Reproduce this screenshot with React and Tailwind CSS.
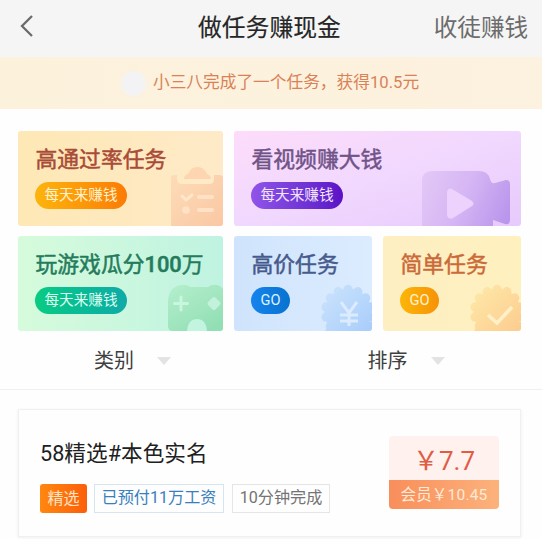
import React from "react";

function Promo({ className, title, titleClass, pill, pillClass, children }) {
  return (
    <section className={`relative flex h-[95px] flex-col items-start overflow-hidden rounded-[3px] ${className}`}>
      <h2 className={`mt-[13px] ml-[17.5px] h-8 whitespace-nowrap text-[21.8px] leading-8 [-webkit-text-stroke:0.5px_currentColor] ${titleClass}`}>{title}</h2>
      <span className={`mt-[6px] ml-[17px] flex h-[27px] items-center justify-center rounded-full text-[14.6px] leading-none whitespace-nowrap ${pillClass}`}>{pill}</span>
      {children}
    </section>
  );
}

function Clipboard() {
  return (
    <svg className="absolute right-0 bottom-0" width="53" height="60" viewBox="0 0 53 60">
      <defs>
        <linearGradient id="clip" x1="0" y1="0" x2="1" y2="1">
          <stop offset="0" stopColor="#fddcb8" />
          <stop offset="1" stopColor="#fac7a3" />
        </linearGradient>
      </defs>
      <path d="M1 12q0-3 3-3h3v4q0 5 5 5h27q5 0 5-5V9h6q2 0 3 2v49H1z" fill="url(#clip)" />
      <path d="M14 13q0-4 4-5 3-7 9.500-7T37 8q4 1 4 5z" fill="#fdd5b0" />
      <path d="m12 30 4 4 6-5" fill="none" stroke="#ffe7ca" strokeWidth="3" strokeLinecap="round" strokeLinejoin="round" />
      <path d="M29 31h13M29 44h13" stroke="#ffe2c5" strokeWidth="4" strokeLinecap="round" />
      <circle cx="16" cy="44" r="3.8" fill="#ffe2c5" />
    </svg>
  );
}

function Camera() {
  return (
    <svg className="absolute right-[9px] bottom-0" width="92" height="56" viewBox="0 0 92 56">
      <defs>
        <linearGradient id="cam" x1="0" y1="0" x2="92" y2="40" gradientUnits="userSpaceOnUse">
          <stop offset="0" stopColor="#e4c9f6" />
          <stop offset=".5" stopColor="#d6b6f4" />
          <stop offset="1" stopColor="#b995ec" />
        </linearGradient>
      </defs>
      <path d="M2 56V11Q2 1 12 1h47q9 0 11 8 1 5 5 4l11-3q4 0 4 4v36q0 5-5 4l-12-4v6z" fill="url(#cam)" />
      <path d="M27 22q1-5 5-3l20 12q3 3 0 5L33 48q-5 2-6-3z" fill="#ecd2fc" />
    </svg>
  );
}

function Gamepad() {
  return (
    <svg className="absolute right-0 bottom-0" width="57" height="47" viewBox="0 0 57 47">
      <defs>
        <linearGradient id="game" x1="0" y1="0" x2=".7" y2="1">
          <stop offset="0" stopColor="#b5efcd" />
          <stop offset="1" stopColor="#93dfb5" />
        </linearGradient>
      </defs>
      <path d="M2 42V17Q3 2 16 1q5-1 8 2h18q4-3 9-2 4 1 6 4v42H41q-1-12-10-12T21 47H7q-5 0-5-5z" fill="url(#game)" />
      <path d="M15 13v13M8.500 19.500h13" stroke="#c9f6df" strokeWidth="3" strokeLinecap="round" />
      <path d="m48 15 4.500 4.500L48 24l-4.500-4.500z" fill="#c3f2dc" stroke="#c3f2dc" strokeWidth="4" strokeLinejoin="round" />
    </svg>
  );
}

const BUMPS = Array.from({ length: 14 }, (_, i) => {
  const angle = (i / 14) * Math.PI * 2 - Math.PI / 2;
  return [28 + Math.cos(angle) * 22.5, 28 + Math.sin(angle) * 22.5];
});

function Seal({ id, from, to, children }) {
  return (
    <svg className="absolute right-0 bottom-0" width="52" height="47" viewBox="0 0 52 47">
      <defs>
        <linearGradient id={id} x1="6" y1="4" x2="48" y2="47" gradientUnits="userSpaceOnUse">
          <stop offset="0" stopColor={from} />
          <stop offset="1" stopColor={to} />
        </linearGradient>
      </defs>
      <g fill={`url(#${id})`}>
        <circle cx="28" cy="28" r="23.5" />
        {BUMPS.map(([x, y], i) => (
          <circle key={i} cx={x} cy={y} r="4.7" />
        ))}
        <path d="M10 38h42v9H5z" />
      </g>
      {children}
    </svg>
  );
}

function Filter({ children }) {
  return (
    <div className="flex items-center text-[20px] leading-8 text-[#404040]">
      {children}
      <span className="ml-[23px] h-0 w-0 border-x-[7px] border-t-[8px] border-x-transparent border-t-[#e3e3e3]" />
    </div>
  );
}

export default function App() {
  return (
    <main className="flex h-[539px] w-[542px] flex-col overflow-hidden bg-[#fefefe] font-[Roboto,'Noto_Sans_CJK_SC',sans-serif]">
      <header className="flex h-[57px] shrink-0 items-center bg-[#f5f5f5] pb-[2px]">
        <svg className="mt-[-4px] ml-[18px]" width="18" height="26" viewBox="0 0 18 26" fill="none" stroke="#6b6b6b" strokeWidth="2.3">
          <path d="M14 3 4 13l10 10" />
        </svg>
        <h1 className="ml-[162px] text-[23.8px] leading-8 whitespace-nowrap text-[#262626] [-webkit-text-stroke:0.15px_currentColor]">做任务赚现金</h1>
        <span className="ml-[93px] text-[23.6px] leading-8 whitespace-nowrap text-[#6c6c6c]">收徒赚钱</span>
      </header>
      <div className="flex h-[52px] shrink-0 items-center bg-linear-to-r from-[#fcf2dc] to-[#fdf1df]">
        <span className="ml-[121px] h-[25px] w-[25px] rounded-full bg-[#f3f3f5] blur-[1.5px]" />
        <p className="ml-[7px] text-[16.7px] leading-6 whitespace-nowrap text-[#d98257]">小三八完成了一个任务，获得10.5元</p>
      </div>

      <div className="mt-[22px] flex shrink-0 flex-col gap-[10px] px-[18px]">
        <div className="flex gap-[11px]">
          <Promo className="w-[205px] bg-linear-to-r from-[#fee8b5] to-[#feeac8]" title="高通过率任务" titleClass="text-[#a94b37]" pill="每天来赚钱" pillClass="w-[92px] bg-linear-to-r from-[#fcb40d] to-[#fb7b06] text-[#fff2cc]">
            <Clipboard />
          </Promo>
          <Promo className="w-[287px] bg-linear-to-br from-[#fddcfa] via-[#f1d8fe] to-[#e6cafc]" title="看视频赚大钱" titleClass="text-[#705388]" pill="每天来赚钱" pillClass="w-[92px] bg-linear-to-r from-[#9054e9] to-[#5b10c5] text-[#f4e5ff]">
            <Camera />
          </Promo>
        </div>
        <div className="flex gap-[11px]">
          <Promo className="w-[205px] bg-linear-to-r from-[#d6fbdc] to-[#bff3e1]" title={<>玩游戏瓜分<span className="font-medium">100</span>万</>} titleClass="text-[#247b5c]" pill="每天来赚钱" pillClass="w-[92px] bg-linear-to-r from-[#0acb82] to-[#10aaa7] text-[#dcffee]">
            <Gamepad />
          </Promo>
          <Promo className="w-[138px] bg-linear-to-r from-[#cfe4fc] to-[#dcecff]" title="高价任务" titleClass="text-[#465a8b]" pill="GO" pillClass="w-[39px] bg-linear-to-r from-[#1584ed] to-[#0872cf] text-[#def3ff]">
            <Seal id="coin" from="#cae2fc" to="#a9cefb">
              <path d="m21 18 8 11 8-11M29 29v13M20 31h18M20 37h18" fill="none" stroke="#dcebff" strokeWidth="3" />
            </Seal>
          </Promo>
          <Promo className="w-[138px] bg-linear-to-r from-[#feefc3] to-[#fff0bf]" title="简单任务" titleClass="text-[#ca6939]" pill="GO" pillClass="w-[39px] bg-linear-to-r from-[#fcb608] to-[#f69208] text-[#fff2cc]">
            <Seal id="check" from="#fee8a8" to="#fccd90">
              <path d="m19 31 9 8 15-16" fill="none" stroke="#fff0c7" strokeWidth="3.6" />
            </Seal>
          </Promo>
        </div>
      </div>

      <div className="flex h-[59px] shrink-0 items-center border-b border-[#f0f0f0] pt-[2px]">
        <div className="ml-[94px] w-[273.5px]"><Filter>类别</Filter></div>
        <Filter>排序</Filter>
      </div>

      <article className="mx-[18px] mt-[19px] flex h-[128px] w-[503px] shrink-0 justify-between border border-[#f0f0f4] bg-[#fefefe] shadow-[0_1px_4px_#f0f0f5]">
        <div className="ml-[21px] pt-[28px]">
          <h3 className="text-[21.6px] leading-8 tracking-[0.05px] whitespace-nowrap text-[#202020]">58精选#本色实名</h3>
          <div className="mt-[14px] flex h-[29px] text-[16px] leading-none whitespace-nowrap">
            <span className="mr-[7px] flex w-[47px] items-center justify-center rounded-[3px] bg-linear-to-r from-[#ff870f] to-[#fc5d0b] text-[#ffe3c6]">精选</span>
            <span className="mr-[8px] flex w-[130px] items-center justify-center border border-[#d7e5f0] text-[16.1px] text-[#397fbd]">已预付11万工资</span>
            <span className="flex w-[98px] items-center justify-center border border-[#e5e5e5] text-[16.1px] text-[#747474]">10分钟完成</span>
          </div>
        </div>
        <div className="mt-[26px] mr-[21px] flex h-[73px] w-[110px] flex-col overflow-hidden rounded-[4px]">
          <div className="flex h-[44px] items-center justify-center bg-[#fff1ed] pt-[5px] text-[26px] leading-none whitespace-nowrap text-[#e15c45]">￥7.7</div>
          <div className="flex h-[29px] items-center justify-center bg-linear-to-r from-[#f88e5b] to-[#fcb27c] pt-[2px] text-[15.5px] leading-none tracking-[0.2px] whitespace-nowrap text-[#ffead5]">会员￥10.45</div>
        </div>
      </article>
    </main>
  );
}
